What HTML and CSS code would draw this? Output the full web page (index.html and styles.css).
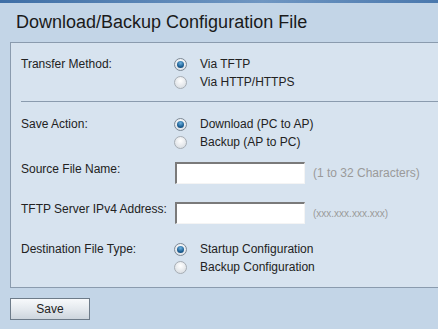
FILE: index.html
```html
<!DOCTYPE html>
<html lang="en">
<head>
  <meta charset="UTF-8">
  <title>Download/Backup Configuration File</title>
  <link rel="stylesheet" href="styles.css">
</head>
<body>

<!-- top strip -->
<div class="topbar"></div>

<h1 class="page-title">Download/Backup Configuration File</h1>

<div class="panel">

  <!-- transfer method -->
  <div class="section first">
    <div class="row">
      <div class="label">Transfer Method:</div>
      <div class="options">
        <label class="opt"><span class="radio on"></span>Via TFTP</label>
        <label class="opt"><span class="radio"></span>Via HTTP/HTTPS</label>
      </div>
    </div>
  </div>

  <div class="divider"></div>

  <!-- save action + fields -->
  <div class="section second">
    <div class="row">
      <div class="label">Save Action:</div>
      <div class="options">
        <label class="opt"><span class="radio on"></span>Download (PC to AP)</label>
        <label class="opt"><span class="radio"></span>Backup (AP to PC)</label>
      </div>
    </div>

    <div class="row field-row">
      <div class="label field-label">Source File Name:</div>
      <input type="text" class="text-field">
      <span class="hint">(1 to 32 Characters)</span>
    </div>

    <div class="row field-row">
      <div class="label field-label">TFTP Server IPv4 Address:</div>
      <input type="text" class="text-field">
      <span class="hint small">(xxx.xxx.xxx.xxx)</span>
    </div>

    <div class="row dest-row">
      <div class="label">Destination File Type:</div>
      <div class="options">
        <label class="opt"><span class="radio on"></span>Startup Configuration</label>
        <label class="opt"><span class="radio"></span>Backup Configuration</label>
      </div>
    </div>
  </div>

</div>

<div class="actions">
  <button class="btn">Save</button>
</div>

</body>
</html>
```

FILE: styles.css
```css
/* base */
body {
  margin: 0;
  font-family: "Liberation Sans", Arial, sans-serif;
  font-size: 12px;
  color: #222;
  background: #c3d5e7;
  overflow: hidden;
}
.topbar {
  height: 3px;
  background: linear-gradient(to right, #3f6fa6, #6f96c2 60%, #4a78ad);
}
.page-title {
  margin: 0;
  padding: 8px 0 0 16px;
  height: 31px;
  font-size: 18px;
  font-weight: normal;
  line-height: 22px;
  color: #1a1a1a;
}

/* panel */
.panel {
  margin-left: 10px;
  background: #d7e3ef;
  border: 1px solid #8a9bae;
  border-right: none;
}
.section {
  padding-left: 10px;
}
.section.first {
  padding-top: 12px;
  padding-bottom: 10px;
}
.section.second {
  padding-top: 13px;
  padding-bottom: 11px;
}
.divider {
  margin-left: 10px;
  height: 1px;
  background: #8a9bae;
}

.row {
  display: flex;
  align-items: flex-start;
}
.label {
  width: 154px;
  line-height: 18px;
  flex-shrink: 0;
}
.options {
  display: flex;
  flex-direction: column;
}
.opt {
  display: flex;
  align-items: center;
  height: 18px;
}

/* radio */
.radio {
  width: 11px;
  height: 11px;
  border-radius: 50%;
  border: 1px solid #a6adb4;
  background: radial-gradient(circle at 50% 35%, #ffffff, #dfe3e7 70%);
  margin: 0 13px 0 -1px;
  box-sizing: content-box;
  position: relative;
}
.radio.on {
  border-color: #7e8a96;
  background: radial-gradient(circle at 50% 35%, #ffffff, #e1e5ea 70%);
}
.radio.on::after {
  content: "";
  position: absolute;
  left: 2px;
  top: 2px;
  width: 7px;
  height: 7px;
  border-radius: 50%;
  background: radial-gradient(circle at 50% 30%, #6fb2e0, #1c5f93 60%, #0f3f6b);
}

/* text fields */
.field-row {
  margin-top: 11px;
}
.field-row + .field-row {
  margin-top: 17px;
}
.field-label {
  line-height: 14px;
}
.text-field {
  width: 123px;
  height: 19px;
  margin: 0;
  padding: 0 2px;
  border: 2px solid #f4f4f4;
  border-top-color: #7a7a7a;
  border-left-color: #7a7a7a;
  border-right-width: 1px;
  border-bottom-width: 1px;
  background: #fff;
  font: inherit;
  box-sizing: content-box;
}
.hint {
  margin-left: 8px;
  color: #9a9a9a;
  font-size: 12px;
  line-height: 23px;
}
.hint.small {
  font-size: 10px;
}
.dest-row {
  margin-top: 15px;
}

/* button */
.actions {
  padding: 10px 0 0 10px;
}
.btn {
  width: 80px;
  height: 22px;
  border: 1px solid #6d7b89;
  border-radius: 0;
  background: linear-gradient(#f7f9fb, #e4e9ee 50%, #cdd5dd);
  font-family: "Liberation Sans", Arial, sans-serif;
  font-size: 12px;
  color: #222;
  padding: 0;
}
```
